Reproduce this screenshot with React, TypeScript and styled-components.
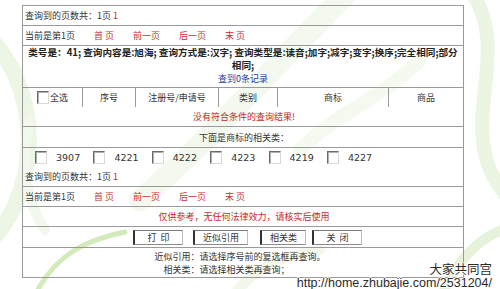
import React from "react";
import styled, { createGlobalStyle } from "styled-components";

const GlobalStyle = createGlobalStyle`
  html, body { margin: 0; padding: 0; background: #ffffff; }
  body {
    font-family: "Noto Sans CJK SC", "Noto Sans", sans-serif;
    font-size: 9px;
    color: #333333;
  }
  * { box-sizing: border-box; }
`;

const Page = styled.div`
  position: relative;
  width: 500px;
  height: 289px;
  overflow: hidden;
  padding: 5px 0 0 22px;
`;

const Backdrop = styled.svg`
  position: absolute;
  left: 0;
  top: 0;
  width: 500px;
  height: 289px;
  z-index: 0;
`;

const Table = styled.div`
  position: relative;
  z-index: 1;
  width: 442px;
  border: 1px solid #9a9a9a;
  display: flex;
  flex-direction: column;
`;

const Row = styled.div<{ $h: number; $center?: boolean }>`
  box-sizing: content-box;
  height: ${(p) => p.$h}px;
  display: flex;
  align-items: center;
  justify-content: ${(p) => (p.$center ? "center" : "flex-start")};
  padding: 0 0 0 2px;
  white-space: nowrap;
  & + & { border-top: 1px solid #9a9a9a; }
`;

const InfoBlock = styled.div`
  box-sizing: content-box;
  height: 41px;
  border-top: 1px solid #9a9a9a;
  text-align: center;
  line-height: 13px;
  padding: 0 1px;
  overflow: hidden;
`;

const BoldLine = styled.div`
  font-weight: bold;
  font-size: 9.6px;
  color: #222222;
  white-space: nowrap;
`;

const BlueText = styled.div`
  color: #1f3d9e;
`;

const RedText = styled.span<{ $strong?: boolean }>`
  color: #c81e1e;
  font-weight: ${(p) => (p.$strong ? "bold" : "normal")};
`;

const NavLink = styled.span`
  color: #c83030;
  margin-left: 19px;
`;

const HeaderGrid = styled.div`
  box-sizing: content-box;
  height: 19px;
  border-top: 1px solid #9a9a9a;
  display: grid;
  grid-template-columns: 59px 53px 83px 59px 111px 75px;
`;

const HeaderCell = styled.div`
  display: flex;
  align-items: center;
  justify-content: center;
  white-space: nowrap;
  & + & { border-left: 1px solid #9a9a9a; }
`;

const CheckBox = styled.span`
  display: inline-block;
  width: 12px;
  height: 13px;
  background: #ffffff;
  border-style: solid;
  border-width: 1px;
  border-color: #6a6a6a #d8d8d8 #d8d8d8 #6a6a6a;
  box-shadow: inset 1px 1px 0 #b0b0b0;
  flex: none;
`;

const CheckLabel = styled.span`
  margin-left: 1px;
`;

const ChecksRow = styled.div`
  box-sizing: content-box;
  height: 19px;
  border-top: 1px solid #9a9a9a;
  display: flex;
  align-items: center;
  padding-left: 12px;
`;

const CheckItem = styled.div`
  width: 58.4px;
  display: flex;
  align-items: center;
  flex: none;
`;

const Code = styled.span`
  font-family: "DejaVu Sans", "Liberation Sans", sans-serif;
  font-size: 9.5px;
  margin-left: 9px;
  color: #333333;
`;

const ButtonRow = styled.div`
  box-sizing: content-box;
  height: 20px;
  border-top: 1px solid #9a9a9a;
  display: flex;
  align-items: center;
  padding-left: 110px;
`;

const Button = styled.button<{ $w: number; $ml: number }>`
  width: ${(p) => p.$w}px;
  height: 15px;
  margin: 0 0 0 ${(p) => p.$ml}px;
  padding: 0;
  background: #ffffff;
  font: inherit;
  color: #333333;
  border-style: solid;
  border-width: 1px 1px 1px 2px;
  border-color: #7a7a7a #bdbdbd #8a8a8a #333333;
  display: flex;
  align-items: center;
  justify-content: center;
  line-height: 1;
`;

const HelpRow = styled.div`
  box-sizing: content-box;
  height: 29px;
  border-top: 1px solid #9a9a9a;
  display: flex;
  align-items: center;
  justify-content: center;
`;

const HelpGrid = styled.div`
  display: grid;
  grid-template-columns: auto auto;
  line-height: 13px;
  margin-left: -6px;
`;

const HelpLabel = styled.div`
  text-align: right;
`;

const Mark = styled.div`
  position: absolute;
  right: 8px;
  bottom: -1px;
  z-index: 2;
  text-align: right;
  color: #2a2a2a;
  text-shadow: 1px 0 0 #fff, -1px 0 0 #fff, 0 1px 0 #fff, 0 -1px 0 #fff, 1px 1px 1px #fff;
`;

const MarkTitle = styled.div`
  font-family: "Noto Sans CJK SC", sans-serif;
  font-size: 12.5px;
  line-height: 13px;
  margin-bottom: 2px;
`;

const MarkUrl = styled.div`
  font-family: "Liberation Sans", Arial, sans-serif;
  font-size: 12.5px;
  line-height: 13px;
`;

const PageCount = () => (
  <Row $h={19}>
    查询到的页数共：1页&nbsp;<RedText>1</RedText>
  </Row>
);

const PageNav = () => (
  <Row $h={19}>
    当前是第1页
    <NavLink>首 页</NavLink>
    <NavLink>前一页</NavLink>
    <NavLink>后一页</NavLink>
    <NavLink>末 页</NavLink>
  </Row>
);

const codes = ["3907", "4221", "4222", "4223", "4219", "4227"];

export default function App() {
  return (
    <>
      <GlobalStyle />
      <Page>
        <Backdrop viewBox="0 0 500 289">
          <g fill="none" strokeLinecap="round">
            <path d="M -20 30 C 45 80, 45 200, -20 250" stroke="#edf6e5" strokeWidth="16" />
            <path d="M 30 120 C 20 160, 25 200, 45 230" stroke="#f2f8ed" strokeWidth="10" />
            <path d="M 140 200 C 210 140, 270 70, 350 -10" stroke="#f4f9ef" strokeWidth="22" />
            <path d="M 300 150 C 340 110, 380 100, 420 60" stroke="#f5faf1" strokeWidth="14" />
            <path d="M 470 -10 C 520 60, 440 140, 520 210" stroke="#ebf5e2" strokeWidth="14" />
            <path d="M 440 300 C 460 250, 490 230, 520 225" stroke="#e6f2da" strokeWidth="10" />
            <path d="M 35 295 C 55 255, 85 240, 125 232" stroke="#d3eaba" strokeWidth="5" />
            <path d="M 230 300 C 250 270, 280 255, 320 250" stroke="#f1f8ea" strokeWidth="10" />
          </g>
        </Backdrop>
        <Table>
          <PageCount />
          <PageNav />
          <InfoBlock>
            <BoldLine>
              类号是：41; 查询内容是:旭海; 查询方式是:汉字; 查询类型是:读音;加字;减字;变字;换序;完全相同;部分
            </BoldLine>
            <BoldLine>相同;</BoldLine>
            <BlueText>查到0条记录</BlueText>
          </InfoBlock>
          <HeaderGrid>
            <HeaderCell>
              <CheckBox />
              <CheckLabel>全选</CheckLabel>
            </HeaderCell>
            <HeaderCell>序号</HeaderCell>
            <HeaderCell>注册号/申请号</HeaderCell>
            <HeaderCell>类别</HeaderCell>
            <HeaderCell>商标</HeaderCell>
            <HeaderCell>商品</HeaderCell>
          </HeaderGrid>
          <Row $h={19} $center>
            <RedText>没有符合条件的查询结果!</RedText>
          </Row>
          <Row $h={20} $center>
            下面是商标的相关类：
          </Row>
          <ChecksRow>
            {codes.map((c) => (
              <CheckItem key={c}>
                <CheckBox />
                <Code>{c}</Code>
              </CheckItem>
            ))}
          </ChecksRow>
          <PageCount />
          <PageNav />
          <Row $h={19} $center>
            <RedText>仅供参考，无任何法律效力，请核实后使用</RedText>
          </Row>
          <ButtonRow>
            <Button $w={50} $ml={0}>打&nbsp;&nbsp;印</Button>
            <Button $w={55} $ml={10}>近似引用</Button>
            <Button $w={46} $ml={12}>相关类</Button>
            <Button $w={50} $ml={6}>关&nbsp;&nbsp;闭</Button>
          </ButtonRow>
          <HelpRow>
            <HelpGrid>
              <HelpLabel>近似引用：</HelpLabel>
              <div>请选择序号前的复选框再查询。</div>
              <HelpLabel>相关类：</HelpLabel>
              <div>请选择相关类再查询；</div>
            </HelpGrid>
          </HelpRow>
        </Table>
        <Mark>
          <MarkTitle>大家共同宫</MarkTitle>
          <MarkUrl>http://home.zhubajie.com/2531204/</MarkUrl>
        </Mark>
      </Page>
    </>
  );
}
